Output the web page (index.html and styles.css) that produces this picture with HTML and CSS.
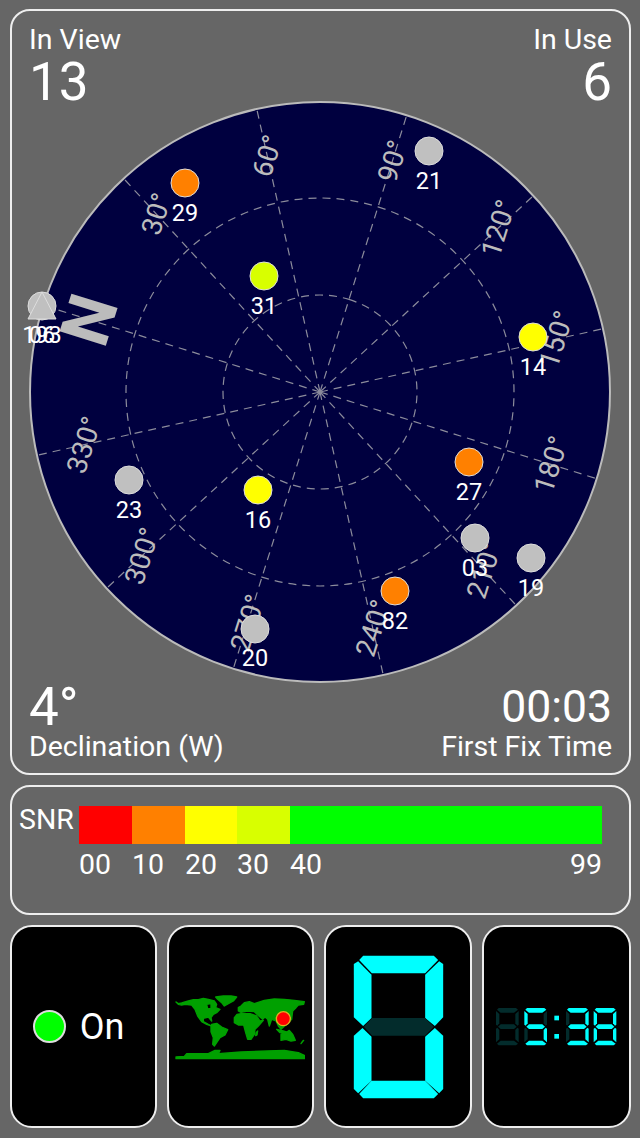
FILE: index.html
```html
<!DOCTYPE html>
<html lang="en">
<head>
    <meta charset="UTF-8">
    <title>GPS Status</title>
    <link rel="stylesheet" href="styles.css">
</head>
<body>
    <section class="panel sky-panel">
        <div class="readouts readouts-top">
            <div>
                <div class="label">In View</div>
                <div class="value">13</div>
            </div>
            <div class="right">
                <div class="label">In Use</div>
                <div class="value">6</div>
            </div>
        </div>

        <svg class="radar" width="617" height="582" viewBox="12 101 617 582">
            <circle class="disc" cx="320" cy="392" r="290"/>
            <g transform="translate(320 392) rotate(-72.6)">
                <g class="grid">
                    <circle r="97"/>
                    <circle r="194"/>
                    <line y2="-289"/>
                    <line y2="-289" transform="rotate(30)"/>
                    <line y2="-289" transform="rotate(60)"/>
                    <line y2="-289" transform="rotate(90)"/>
                    <line y2="-289" transform="rotate(120)"/>
                    <line y2="-289" transform="rotate(150)"/>
                    <line y2="-289" transform="rotate(180)"/>
                    <line y2="-289" transform="rotate(210)"/>
                    <line y2="-289" transform="rotate(240)"/>
                    <line y2="-289" transform="rotate(270)"/>
                    <line y2="-289" transform="rotate(300)"/>
                    <line y2="-289" transform="rotate(330)"/>
                </g>
                <text class="north" y="-242" dy=".35em">N</text>
                <g class="bearing">
                    <text dy=".35em" transform="rotate(30) translate(0 -242) rotate(-30)">30°</text>
                    <text dy=".35em" transform="rotate(60) translate(0 -242) rotate(-60)">60°</text>
                    <text dy=".35em" transform="rotate(90) translate(0 -242) rotate(-90)">90°</text>
                    <text dy=".35em" transform="rotate(120) translate(0 -242) rotate(-120)">120°</text>
                    <text dy=".35em" transform="rotate(150) translate(0 -242) rotate(-150)">150°</text>
                    <text dy=".35em" transform="rotate(180) translate(0 -242) rotate(-180)">180°</text>
                    <text dy=".35em" transform="rotate(210) translate(0 -242) rotate(-210)">210°</text>
                    <text dy=".35em" transform="rotate(240) translate(0 -242) rotate(-240)">240°</text>
                    <text dy=".35em" transform="rotate(270) translate(0 -242) rotate(-270)">270°</text>
                    <text dy=".35em" transform="rotate(300) translate(0 -242) rotate(-300)">300°</text>
                    <text dy=".35em" transform="rotate(330) translate(0 -242) rotate(-330)">330°</text>
                </g>
            </g>

            <!-- satellites, colour is the SNR band -->
            <circle class="sat snr-none" cx="42" cy="306" r="14"/>
            <polygon class="sat snr-none" points="42,292 56,319 28,319"/>
            <text class="sat-id" x="42" y="343">193</text>
            <text class="sat-id" x="42" y="343">06</text>
            <circle class="sat snr-10" cx="185" cy="183" r="14"/>
            <text class="sat-id" x="185" y="221">29</text>
            <circle class="sat snr-none" cx="429" cy="151" r="14"/>
            <text class="sat-id" x="429" y="189">21</text>
            <circle class="sat snr-30" cx="264" cy="276" r="14"/>
            <text class="sat-id" x="264" y="314">31</text>
            <circle class="sat snr-20" cx="533" cy="337" r="14"/>
            <text class="sat-id" x="533" y="375">14</text>
            <circle class="sat snr-none" cx="129" cy="480" r="14"/>
            <text class="sat-id" x="129" y="518">23</text>
            <circle class="sat snr-20" cx="258" cy="490" r="14"/>
            <text class="sat-id" x="258" y="528">16</text>
            <circle class="sat snr-10" cx="469" cy="462" r="14"/>
            <text class="sat-id" x="469" y="500">27</text>
            <circle class="sat snr-none" cx="475" cy="538" r="14"/>
            <text class="sat-id" x="475" y="576">03</text>
            <circle class="sat snr-none" cx="531" cy="558" r="14"/>
            <text class="sat-id" x="531" y="596">19</text>
            <circle class="sat snr-10" cx="395" cy="591" r="14"/>
            <text class="sat-id" x="395" y="629">82</text>
            <circle class="sat snr-none" cx="255" cy="629" r="14"/>
            <text class="sat-id" x="255" y="666">20</text>
        </svg>

        <div class="readouts readouts-bottom">
            <div>
                <div class="value">4°</div>
                <div class="label">Declination (W)</div>
            </div>
            <div class="right">
                <div class="value value-time">00:03</div>
                <div class="label">First Fix Time</div>
            </div>
        </div>
    </section>

    <section class="panel snr-panel">
        <div class="snr-title">SNR</div>
        <div class="snr-scale">
            <div class="band band-00"></div>
            <div class="band band-10"></div>
            <div class="band band-20"></div>
            <div class="band band-30"></div>
            <div class="band band-40"></div>
            <div class="tick">00</div>
            <div class="tick">10</div>
            <div class="tick">20</div>
            <div class="tick">30</div>
            <div class="tick tick-wide"><span>40</span><span>99</span></div>
        </div>
    </section>

    <section class="cards">
        <div class="card card-status">
            <span class="led"></span>
            <span class="status-text">On</span>
        </div>

        <div class="card">
            <svg width="132" height="72" viewBox="0 0 396 216">
                <path class="land" fill-rule="evenodd" d="M3,33 10,38 20,36 40,30 55,26 70,26 85,22 100,25 118,30 125,40 122,50 135,55 125,65 115,70 108,80 110,90 100,78 85,82 85,92 100,100 110,105 95,100 80,92 68,75 60,55 50,42 30,40 20,42 10,40Z M95,40 108,38 108,52 98,54Z"/>
                <path class="land" d="M122,18 145,15 168,15 185,18 175,30 160,38 148,45 140,35 128,25Z"/>
                <path class="land" d="M110,100 125,97 140,108 158,116 150,132 135,140 125,155 118,165 113,160 115,140 108,122 108,108Z"/>
                <path class="land" d="M178,80 186,70 198,68 225,68 245,75 255,90 265,88 250,105 240,115 238,130 228,145 218,145 212,125 206,102 190,102 178,95Z"/>
                <path class="land" d="M243,125 248,120 246,132 242,134Z"/>
                <path class="land" d="M198,45 208,35 223,32 238,38 268,28 298,24 328,25 358,28 388,32 386,40 370,42 363,50 353,60 350,85 335,100 318,115 310,105 303,90 290,85 283,105 278,85 270,78 263,85 248,72 238,62 218,60 198,64 190,60 190,50Z"/>
                <path class="land" d="M305,115 325,120 350,128 335,130 315,125Z"/>
                <path class="land" d="M318,130 333,125 343,118 353,130 361,148 348,150 333,145 318,148Z"/>
                <path class="land" d="M383,150 386,148 378,158Z"/>
                <path class="land" d="M3,198 28,196 35,188 100,188 120,178 135,178 130,188 198,183 278,180 328,178 370,185 388,193 388,203 3,203Z"/>
                <circle class="here" cx="325" cy="83" r="21"/>
            </svg>
        </div>

        <div class="card">
            <svg class="lcd" width="91" height="144" viewBox="100 103 272 432">
                <polygon points="118,118 130,105 342,105 355,118 316,158 156,158"/>
                <polygon points="102,130 115,122 155,162 155,292 130,316 102,290"/>
                <polygon points="370,130 358,122 316,162 316,292 345,316 370,290"/>
                <polygon class="off" points="132,318 157,292 316,292 342,318 316,345 157,345"/>
                <polygon points="102,345 128,322 155,348 155,480 115,518 102,505"/>
                <polygon points="370,345 345,322 316,348 316,480 358,518 370,505"/>
                <polygon points="118,520 155,480 316,480 355,520 342,533 130,533"/>
            </svg>
        </div>

        <div class="card">
            <svg class="lcd" width="122" height="38" viewBox="0 0 366 114">
                <defs>
                    <polygon id="seg-top" points="8,0 60,0 66,5 54,14 14,14 3,5"/>
                    <polygon id="seg-ul" points="0,9 10,18 10,46 4,53 0,50"/>
                    <polygon id="seg-ur" points="68,9 58,18 58,46 64,53 68,50"/>
                    <polygon id="seg-mid" points="6,56 14,49 54,49 62,56 54,63 14,63"/>
                    <polygon id="seg-ll" points="0,62 4,59 10,66 10,94 0,103"/>
                    <polygon id="seg-lr" points="68,62 64,59 58,66 58,94 68,103"/>
                    <polygon id="seg-bot" points="3,107 14,98 54,98 66,107 60,112 8,112"/>
                </defs>
                <!-- blank -->
                <g class="off">
                    <use href="#seg-top"/><use href="#seg-ul"/><use href="#seg-ur"/><use href="#seg-mid"/><use href="#seg-ll"/><use href="#seg-lr"/><use href="#seg-bot"/>
                </g>
                <!-- 5 -->
                <g transform="translate(85 0)">
                    <use href="#seg-top"/><use href="#seg-ul"/><use class="off" href="#seg-ur"/><use href="#seg-mid"/><use class="off" href="#seg-ll"/><use href="#seg-lr"/><use href="#seg-bot"/>
                </g>
                <rect x="175" y="23" width="14" height="14"/>
                <rect x="175" y="78" width="14" height="14"/>
                <!-- 3 -->
                <g transform="translate(210 0)">
                    <use href="#seg-top"/><use class="off" href="#seg-ul"/><use href="#seg-ur"/><use href="#seg-mid"/><use class="off" href="#seg-ll"/><use href="#seg-lr"/><use href="#seg-bot"/>
                </g>
                <!-- 8 -->
                <g transform="translate(293 0)">
                    <use href="#seg-top"/><use href="#seg-ul"/><use href="#seg-ur"/><use href="#seg-mid"/><use href="#seg-ll"/><use href="#seg-lr"/><use href="#seg-bot"/>
                </g>
            </svg>
        </div>
    </section>
</body>
</html>
```

FILE: styles.css
```css
* {
    box-sizing: border-box;
}

body {
    margin: 0;
    padding: 9px 9px 0 10px;
    background-color: #666;
    color: #fff;
    font-family: Roboto, sans-serif;
}

.panel {
    border: 2px solid #eee;
    border-radius: 20px;
}

.sky-panel {
    height: 766px;
}

.readouts {
    display: flex;
    justify-content: space-between;
    padding: 0 17px;
}

.readouts-top {
    height: 90px;
    padding-top: 13px;
}

.readouts-bottom {
    height: 90px;
}

.right {
    text-align: right;
}

.label {
    font-size: 28.5px;
    line-height: 32px;
}

.value {
    font-size: 53px;
    line-height: 52px;
}

.readouts-bottom .value {
    height: 48px;
    line-height: 48px;
}

.readouts-bottom .value-time {
    font-size: 44.5px;
}

.radar {
    display: block;
}

.disc {
    fill: #00003f;
    stroke: #bbb;
    stroke-width: 2;
}

.grid circle,
.grid line {
    fill: none;
    stroke: #8c8c9c;
    stroke-width: 1.2;
    stroke-dasharray: 8 6;
}

.north {
    fill: #bcbcbc;
    font-size: 68px;
    font-weight: bold;
    text-anchor: middle;
}

.bearing text {
    fill: #bcbcbc;
    font-size: 28px;
    text-anchor: middle;
}

.sat {
    stroke: #ddd;
    stroke-width: 1;
}

.snr-none {
    fill: #c0c0c0;
}

.snr-10 {
    fill: #ff8000;
}

.snr-20 {
    fill: #ffff00;
}

.snr-30 {
    fill: #d8ff00;
}

.sat-id {
    fill: #fff;
    font-size: 23.5px;
    text-anchor: middle;
}

.snr-panel {
    display: flex;
    height: 130px;
    margin-top: 10px;
    padding: 16px 0 0 7px;
}

.snr-title {
    width: 60px;
    font-size: 28.5px;
    line-height: 34px;
}

.snr-scale {
    display: grid;
    grid-template-columns: 53px 53px 52px 53px 312px;
    grid-template-rows: 38px auto;
    height: 80px;
    margin-top: 3px;
}

.band-00 {
    background: #ff0000;
}

.band-10 {
    background: #ff8000;
}

.band-20 {
    background: #ffff00;
}

.band-30 {
    background: #d8ff00;
}

.band-40 {
    background: #00ff00;
}

.tick {
    font-size: 28.5px;
    line-height: 42px;
}

.tick-wide {
    display: flex;
    justify-content: space-between;
}

.cards {
    display: grid;
    grid-template-columns: 147px 147px 148px 149px;
    gap: 10px;
    margin-top: 10px;
}

.card {
    display: flex;
    align-items: center;
    justify-content: center;
    height: 203px;
    background: #000;
    border: 2px solid #eee;
    border-radius: 22px;
}

.card-status {
    gap: 14px;
    padding-right: 10px;
}

.led {
    width: 33px;
    height: 33px;
    background: #00ff00;
    border: 2px solid #ddd;
    border-radius: 50%;
}

.status-text {
    font-size: 36px;
}

.land {
    fill: #00a000;
    stroke: #00a000;
    stroke-width: 4;
    stroke-linejoin: round;
}

.here {
    fill: #ff0000;
    stroke: #e0b020;
    stroke-width: 4;
}

.lcd {
    fill: #00ffff;
}

.lcd .off {
    fill: #032c2c;
}
```
